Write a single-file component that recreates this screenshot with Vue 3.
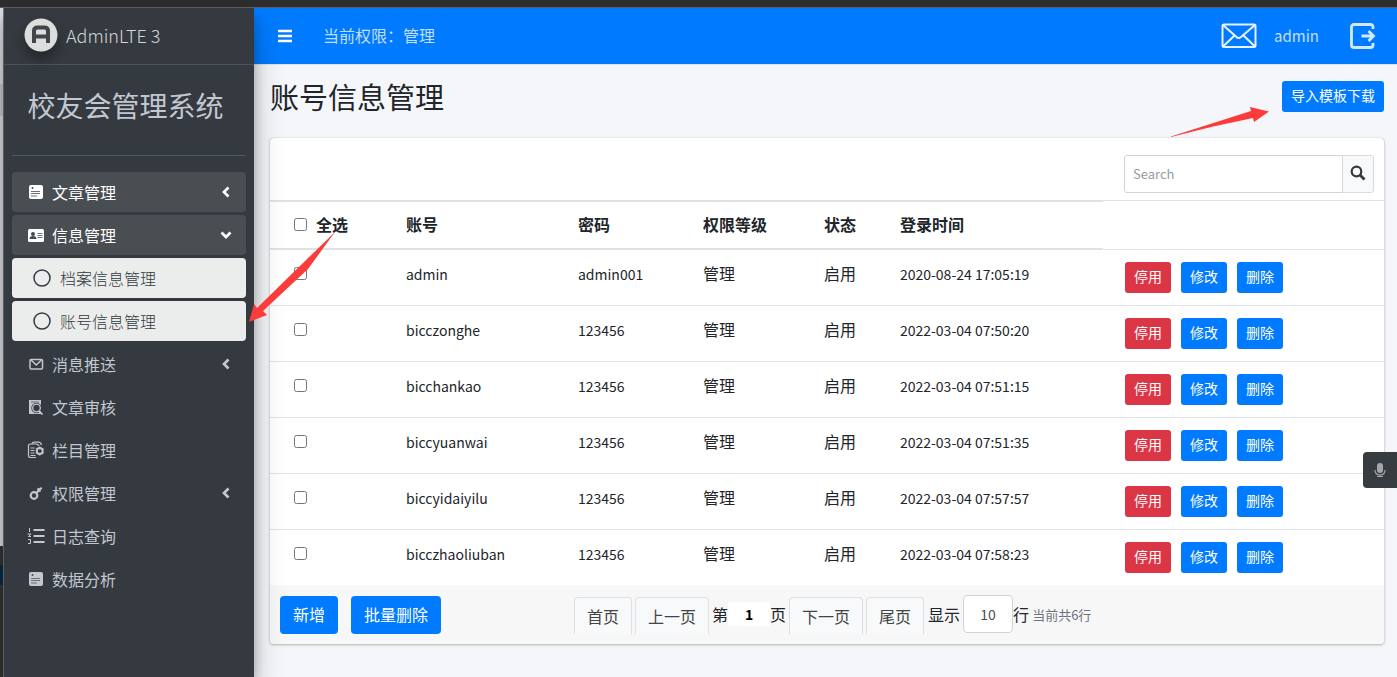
<script setup>
import { ref } from 'vue'

const menu = [
  { label: '文章管理', icon: 'doc', arrow: 'closed', kind: 'open' },
  { label: '信息管理', icon: 'card', arrow: 'expanded', kind: 'open' },
  { label: '档案信息管理', icon: 'circle', kind: 'child' },
  { label: '账号信息管理', icon: 'circle', kind: 'child' },
  { label: '消息推送', icon: 'mail', arrow: 'closed' },
  { label: '文章审核', icon: 'review' },
  { label: '栏目管理', icon: 'columns' },
  { label: '权限管理', icon: 'key', arrow: 'closed' },
  { label: '日志查询', icon: 'list' },
  { label: '数据分析', icon: 'doc' }
]
const rows = ref([
  { name: 'admin', pwd: 'admin001', time: '2020-08-24 17:05:19' },
  { name: 'bicczonghe', pwd: '123456', time: '2022-03-04 07:50:20' },
  { name: 'bicchankao', pwd: '123456', time: '2022-03-04 07:51:15' },
  { name: 'biccyuanwai', pwd: '123456', time: '2022-03-04 07:51:35' },
  { name: 'biccyidaiyilu', pwd: '123456', time: '2022-03-04 07:57:57' },
  { name: 'bicczhaoliuban', pwd: '123456', time: '2022-03-04 07:58:23' }
].map(r => ({ ...r, checked: false })))
const page = ref('1')
const size = ref('10')
const keyword = ref('')
function toggleAll(e) {
  rows.value.forEach(r => { r.checked = e.target.checked })
}
</script>

<template>
  <div class="page">
    <div class="topstrip"></div>
    <div class="shell">
      <div class="edge"></div>
      <aside class="sidebar">
        <a href="#" class="brand">
          <svg class="logo" viewBox="0 0 34 34" aria-hidden="true">
            <circle cx="17" cy="17" r="16.5" fill="#dcdddd" />
            <path d="M10 25V13q0-3.500 3.500-3.500h7q3.500 0 3.500 3.500v12M10 18.500h14" fill="none" stroke="#414548" stroke-width="4" />
          </svg>
          <span>AdminLTE 3</span>
        </a>
        <div class="inner">
          <h2 class="system">校友会管理系统</h2>
          <nav class="menu">
            <a v-for="m in menu" :key="m.label" href="#" class="item" :class="m.kind">
              <span class="ico">
                <svg v-if="m.icon === 'doc'" width="16" height="16" viewBox="0 0 16 16">
                  <rect x="1" y="1" width="14" height="14" rx="2" fill="currentColor" />
                  <circle cx="4.500" cy="4" r="1" fill="#454a4e" />
                  <path d="M3 7.500h9M3 9.500h9M3 12h6" stroke="#6d7277" fill="none" />
                </svg>
                <svg v-else-if="m.icon === 'card'" width="18" height="16" viewBox="0 0 18 16">
                  <rect x="1" y="2" width="16" height="13" rx="1.500" fill="currentColor" />
                  <circle cx="6" cy="7" r="2" fill="#454a4e" />
                  <path d="M2.500 12q0-3 3.500-3t3.500 3z" fill="#454a4e" />
                  <path d="M10.500 6.500h5M10.500 8.500h5M10.500 10.500h5" stroke="#6d7277" fill="none" />
                </svg>
                <svg v-else-if="m.icon === 'circle'" width="18" height="18" viewBox="0 0 18 18">
                  <circle cx="9" cy="9" r="8" fill="none" stroke="currentColor" stroke-width="1.500" />
                </svg>
                <svg v-else-if="m.icon === 'mail'" width="16" height="16" viewBox="0 0 16 16">
                  <rect x="2" y="3.500" width="12.500" height="9.500" rx="1" fill="none" stroke="currentColor" stroke-width="1.500" />
                  <path d="M3 4l5.250 5L13.500 4" fill="none" stroke="currentColor" stroke-width="1.600" />
                </svg>
                <svg v-else-if="m.icon === 'review'" width="16" height="16" viewBox="0 0 16 16">
                  <path d="M1 1h12v14H1z" fill="currentColor" />
                  <path d="M3 3h8" stroke="#666c74" />
                  <circle cx="8.500" cy="9" r="5.200" fill="#343a40" />
                  <circle cx="8.500" cy="9" r="3.800" fill="none" stroke="currentColor" stroke-width="1.300" />
                  <path d="M11 12l3.500 3.500" stroke="currentColor" stroke-width="1.600" />
                </svg>
                <svg v-else-if="m.icon === 'columns'" width="18" height="18" viewBox="0 0 18 18">
                  <path d="M9 16.500H3.500q-2 0-2-2V5q0-2 2-2H9q2 0 3 2" fill="none" stroke="currentColor" stroke-width="1.200" />
                  <path d="M5 3q.500-1.800 2-1.800h4.500q2 0 3 2.800M3.500 7h4M3.500 9.500h4M3.500 12h4M3.500 14.500h5" fill="none" stroke="currentColor" stroke-width="1.200" />
                  <circle cx="12.700" cy="10" r="2.900" fill="none" stroke="currentColor" stroke-width="2" />
                  <path d="M12.700 5.500v9M8.800 7.700l1.500 1M15 11.300l1.700 1M16.700 7.700l-1.500 1M10.300 11.300l-1.500 1" fill="none" stroke="currentColor" stroke-width="1.200" />
                  <circle cx="12.700" cy="10" r="1.700" fill="#343a40" />
                </svg>
                <svg v-else-if="m.icon === 'key'" width="16" height="16" viewBox="0 0 16 16">
                  <circle cx="6" cy="10.500" r="3.300" fill="none" stroke="currentColor" stroke-width="2.200" />
                  <path d="M8 8.500l5-5.500M9.500 3.500l3 3" fill="none" stroke="currentColor" stroke-width="2" />
                  <path d="M12 4l2-1" stroke="currentColor" stroke-width="1.500" />
                </svg>
                <svg v-else width="18" height="18" viewBox="0 0 18 18">
                  <path d="M6.500 3h11M6.500 9h11M6.500 15h11" stroke="currentColor" stroke-width="2" />
                  <path d="M2.500 1v4M.500 7H4L1.500 9.500H4M1 12.500h2.500v4H1" fill="none" stroke="currentColor" />
                </svg>
              </span>
              <span class="label">{{ m.label }}</span>
              <svg v-if="m.arrow" class="chev" :class="m.arrow" width="12" height="12" viewBox="0 0 12 12">
                <path d="M8.500 1.500L4 6l4.500 4.500" fill="none" stroke="currentColor" stroke-width="2.700" />
              </svg>
            </a>
          </nav>
        </div>
      </aside>

      <div class="content">
        <header class="navbar">
          <button class="plain" aria-label="菜单">
            <svg width="16" height="16" viewBox="0 0 16 16"><path d="M1 3h14M1 8h14M1 13h14" stroke="#fff" stroke-width="2.400" /></svg>
          </button>
          <span class="role">当前权限：管理</span>
          <a href="#" class="mail" aria-label="消息">
            <svg width="36" height="26" viewBox="0 0 36 26" fill="none" stroke="#e9f3ff" stroke-width="2">
              <rect x="1.500" y="1.500" width="33" height="22.500" rx="1.500" />
              <path d="M2 2l13.500 12q2 2 4.500 0L34 2M2 23.500l11.500-11M34 23.500L22.500 12.500" />
            </svg>
          </a>
          <a href="#" class="user">admin</a>
          <a href="#" class="exit" aria-label="退出">
            <svg width="26" height="26" viewBox="0 0 26 26" fill="none" stroke="#d3e7ff" stroke-width="2.800">
              <path d="M23 6V4q0-2.500-2.500-2.500H4Q1.500 1.500 1.500 4v18q0 2.500 2.500 2.500h16.500q2.500 0 2.500-2.500v-2" />
              <path d="M11.500 13H23M18.500 8l5 5-5 5" />
            </svg>
          </a>
        </header>

        <main class="main">
          <div class="heading">
            <h1>账号信息管理</h1>
            <button class="btn small">导入模板下载</button>
          </div>
          <section class="card">
            <div class="cardhead">
              <form class="search" @submit.prevent>
                <input v-model="keyword" type="text" placeholder="Search" aria-label="Search" />
                <button aria-label="搜索">
                  <svg width="16" height="16" viewBox="0 0 16 16" fill="none" stroke="#343a40"><circle cx="6.500" cy="6.500" r="4.800" stroke-width="2.200" /><path d="M10 10l4.500 4.500" stroke-width="2.800" /></svg>
                </button>
              </form>
            </div>
            <table>
              <colgroup>
                <col class="c1" /><col class="c2" /><col class="c3" /><col class="c4" /><col class="c5" /><col class="c6" /><col />
              </colgroup>
              <thead>
                <tr>
                  <th class="pick"><label><input type="checkbox" @change="toggleAll" /><span>全选</span></label></th>
                  <th>账号</th><th>密码</th><th>权限等级</th><th>状态</th><th>登录时间</th>
                  <td class="ops"></td>
                </tr>
              </thead>
              <tbody>
                <tr v-for="r in rows" :key="r.name">
                  <td class="pick"><input v-model="r.checked" type="checkbox" :aria-label="r.name" /></td>
                  <td class="latin">{{ r.name }}</td>
                  <td class="latin">{{ r.pwd }}</td>
                  <td class="han">管理</td>
                  <td class="han">启用</td>
                  <td class="latin">{{ r.time }}</td>
                  <td class="ops">
                    <div class="acts">
                      <button class="btn small danger">停用</button>
                      <button class="btn small">修改</button>
                      <button class="btn small">删除</button>
                    </div>
                  </td>
                </tr>
              </tbody>
            </table>
            <footer class="foot">
              <div class="bulk">
                <button class="btn">新增</button>
                <button class="btn">批量删除</button>
              </div>
              <div class="pager">
                <button class="pg">首页</button>
                <button class="pg">上一页</button>
                <label class="cur">第<input v-model="page" type="text" />页</label>
                <button class="pg">下一页</button>
                <button class="pg">尾页</button>
                <label class="size"><span>显示</span><input v-model="size" type="text" />行</label>
                <span class="total">当前共6行</span>
              </div>
            </footer>
          </section>
        </main>
      </div>
    </div>

    <svg class="arrow one" width="98" height="32" viewBox="0 0 98 32" aria-hidden="true">
      <path d="M0 30.500L80 5l-1-4 19 4.500L83 16l-1-4L40 21 0 31z" fill="#fc3b3b" />
    </svg>
    <svg class="arrow two" width="86" height="90" viewBox="0 0 86 90" aria-hidden="true">
      <path d="M86 0L53 32 8 76l-3-4-5 18 18-7-4-4 45-42z" fill="#fc3b3b" />
    </svg>
    <button class="mic" aria-label="语音">
      <svg width="12" height="16" viewBox="0 0 12 16" fill="none" stroke="#a5a7a9">
        <rect x="3" y="1" width="6" height="10" rx="3" fill="#a5a7a9" stroke="none" />
        <path d="M1 8q0 5 5 5t5-5M6 13v2M3 14.500h6" stroke-width="1.200" />
      </svg>
    </button>
  </div>
</template>

<style>
body { background: #f4f6f9; }
</style>

<style scoped>
* { box-sizing: border-box; }
.page {
  position: relative;
  display: flex;
  flex-direction: column;
  min-height: 100vh;
  font-family: "Noto Sans CJK SC", "Noto Sans", sans-serif;
  font-size: 16px;
  line-height: 24px;
  color: #212529;
  overflow: hidden;
}
button, input { font: inherit; margin: 0; }
a { color: inherit; text-decoration: none; }
h1, h2 { margin: 0; font-weight: 400; }
svg { display: block; }
.topstrip { height: 8px; background: #2d2d2d; border-bottom: 1px solid #5d5f61; }
.shell { flex: 1; display: flex; }
.edge {
  width: 4px;
  border-right: 1px solid #77797d;
  background: linear-gradient(#dcdee3 76px, #c9cacf 76px, #c9cacf 108px, #dcdee3 108px, #dcdee3 538px, #343434 538px, #343434 557px, #072c46 557px, #072c46 577px, #343434 577px);
}
.sidebar {
  position: relative;
  z-index: 2;
  width: 250px;
  flex: none;
  background: #343a40;
  color: #c2c7d0;
  box-shadow: 0 14px 28px rgba(0, 0, 0, .25), 0 10px 10px rgba(0, 0, 0, .22);
}
.brand {
  display: flex;
  align-items: center;
  gap: 8px;
  height: 57px;
  padding: 0 20px 3px;
  border-bottom: 1px solid #4b545c;
  font-size: 18px;
  font-weight: 300;
  color: #d2d4d5;
}
.logo { width: 34px; height: 34px; border-radius: 50%; box-shadow: 0 8px 12px rgba(0, 0, 0, .3); }
.inner { padding: 0 8px; }
.system {
  height: 91px;
  padding: 23px 7px 0 0;
  border-bottom: 1px solid #4f5962;
  font-size: 28px;
  line-height: 34px;
  text-align: center;
  white-space: nowrap;
}
.menu { display: flex; flex-direction: column; gap: 3px; padding-top: 16px; }
.item { display: flex; align-items: center; height: 40px; padding: 0 14px; border-radius: 4px; }
.item.open { background: #494e53; color: #fff; }
.item.child { background: #ebedec; color: #343a40; padding-left: 20px; }
.ico { flex: none; width: 20px; margin-right: 6px; display: flex; justify-content: center; }
.child .ico { margin-right: 8px; }
.label { flex: 1; white-space: nowrap; }
.child .label { font-weight: 300; }
.chev.expanded { transform: rotate(-90deg); }

.content { flex: 1; min-width: 0; background: #f4f6f9; }
.navbar {
  display: flex;
  align-items: center;
  height: 57px;
  padding: 0 21px 0 23px;
  background: #007bff;
  border-bottom: 1px solid #dee2e6;
  color: #c2deff;
}
.plain { padding: 0; border: 0; background: none; }
.role { margin-left: 30px; padding-bottom: 2px; flex: 1; }
.mail { margin-right: 17px; }
.user { font-size: 15px; margin-right: 31px; }
.main { padding: 16px 13px 0 16px; }
.heading { display: flex; justify-content: space-between; align-items: flex-start; height: 57px; }
.heading h1 { font-size: 29px; line-height: 30px; color: #212529; }
.btn {
  height: 38px;
  padding: 0 12px 2px;
  border: 0;
  border-radius: 4px;
  background: #007bff;
  color: #fff;
  white-space: nowrap;
}
.bulk .btn { padding: 0 13px 2px; }
.btn.small { height: 31px; padding: 0 9px 3px; border-radius: 3px; font-size: 14px; line-height: 20px; }
.btn.danger { background: #dc3545; }
.card { background: #fff; border-radius: 4px; box-shadow: 0 0 1px rgba(0, 0, 0, .3), 0 1px 3px rgba(0, 0, 0, .25); overflow: hidden; }
.cardhead { display: flex; justify-content: flex-end; height: 62px; padding: 17px 10px 0 0; }
.search { display: flex; width: 250px; height: 38px; }
.search input {
  flex: 1;
  min-width: 0;
  padding: 0 8px;
  border: 1px solid #ced4da;
  border-radius: 3px 0 0 3px;
  background: #fff;
  font-size: 13px;
}
.search input::placeholder { color: #939ba2; }
.search button {
  display: flex;
  justify-content: center;
  align-items: center;
  width: 32px;
  margin-left: -1px;
  padding: 0 0 3px;
  border: 1px solid #d8dbde;
  border-radius: 0 3px 3px 0;
  background: #f8f9fa;
}
table { width: 100%; table-layout: fixed; border-collapse: separate; border-spacing: 0; }
.c1 { width: 11.13%; }
.c2 { width: 15.44%; }
.c3 { width: 11.22%; }
.c4 { width: 10.86%; }
.c5 { width: 6.82%; }
.c6 { width: 19.3%; }
th, td { padding: 12px; text-align: left; vertical-align: top; white-space: nowrap; }
th { height: 50px; padding: 10px 12px; border-top: 2px solid #dee2e6; border-bottom: 2px solid #dee2e6; font-weight: 700; }
thead .ops { border-top: 1px solid #dee2e6; border-bottom: 1px solid #dee2e6; }
tbody td { height: 56px; border-bottom: 1px solid #dee2e6; }
tbody tr:last-child td { height: 55px; border-bottom: 0; }
td.latin { font-size: 14px; }
td.han { padding-top: 11px; }
td.ops { padding-left: 22px; }
.pick { padding-left: 24px; }
.pick label { display: flex; align-items: center; gap: 9px; }
.pick input { display: block; width: 13px; height: 13px; margin: 0; }
td.pick { padding-top: 17px; }
.acts { display: flex; gap: 10px; }
.foot { display: flex; align-items: center; height: 59px; padding: 0 10px; background: #f7f7f7; }
.bulk { display: flex; gap: 13px; flex: 0 0 294px; }
.pager { display: flex; align-items: center; white-space: nowrap; }
.pg {
  height: 37px;
  margin: 2px 3px 0 0;
  padding: 0 12px 1px;
  border: 1px solid #dddfe1;
  border-bottom: 0;
  border-radius: 4px 4px 0 0;
  background: #f8f9fa;
  color: #444;
}
.cur, .size { display: flex; align-items: center; height: 38px; margin-right: 3px; padding-bottom: 2px; }
.cur input { width: 42px; height: 24px; padding: 0; border: 0; background: #fff; color: #000; font-size: 14px; font-weight: 700; text-align: center; }
.size { margin-left: 1px; }
.size span { margin-right: 3px; }
.size input { width: 50px; height: 38px; padding: 0; border: 1px solid #ced4da; border-radius: 4px; background: #fff; color: #495057; font-size: 14px; text-align: center; }
.total { font-size: 13px; color: #6c757d; }

.arrow { position: absolute; z-index: 3; pointer-events: none; }
.one { top: 106px; right: 128px; }
.two { top: 232px; left: 249px; }
.mic {
  position: absolute;
  z-index: 3;
  top: 452px;
  right: 0;
  display: flex;
  align-items: center;
  justify-content: center;
  width: 34px;
  height: 36px;
  padding: 0;
  border: 0;
  border-radius: 4px 0 0 4px;
  background: #373c41;
}
</style>
